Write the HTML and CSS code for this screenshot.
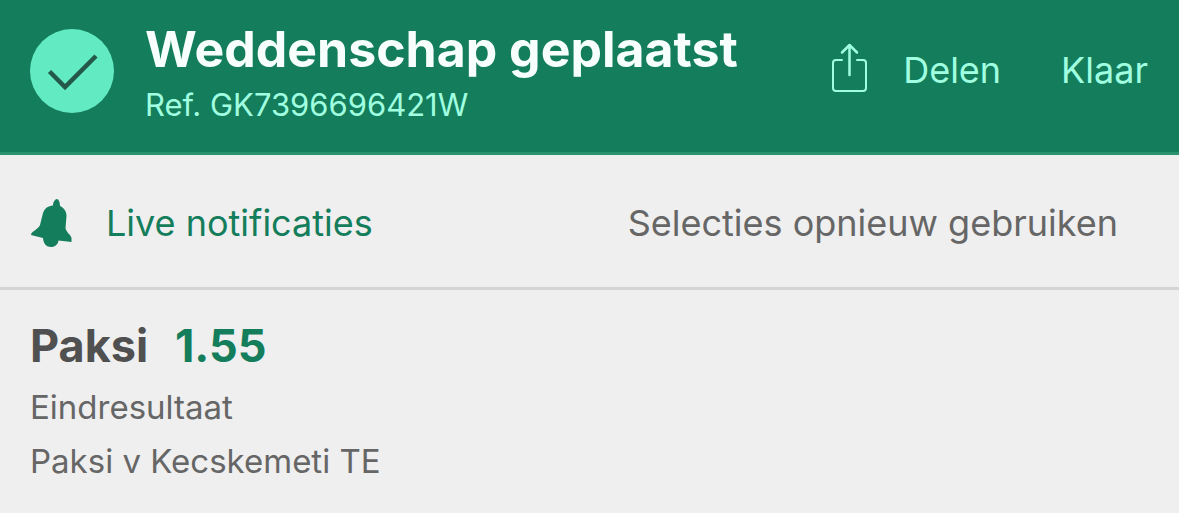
FILE: index.html
```html
<!DOCTYPE html>
<html lang="nl">
<head>
  <meta charset="utf-8">
  <meta name="viewport" content="width=device-width, initial-scale=1">
  <title>Weddenschap geplaatst</title>
  <link rel="stylesheet" href="styles.css">
</head>
<body>
  <header class="receipt-header">
    <svg class="check-icon" viewBox="0 0 84 84" aria-hidden="true">
      <circle cx="42" cy="42" r="42" fill="#62ebc3"/>
      <path d="M19.500 42.500 L35 58 L66 27" fill="none" stroke="#24594a" stroke-width="4.500"/>
    </svg>
    <div class="receipt-title">
      <h1>Weddenschap geplaatst</h1>
      <p>Ref. GK7396696421W</p>
    </div>
    <div class="receipt-actions">
      <button type="button" class="header-button">
        <svg class="share-icon" viewBox="0 0 36 50" aria-hidden="true">
          <path stroke-width="2" d="M11 17 H5 Q2 17 2 20 V45 Q2 48 5 48 H32 Q35 48 35 45 V20 Q35 17 32 17 H26"/>
          <path stroke-width="2.500" d="M18.500 32 V2 M11 9.500 L18.500 2 L26 9.500"/>
        </svg>
        Delen
      </button>
      <button type="button" class="header-button">Klaar</button>
    </div>
  </header>

  <div class="toolbar">
    <button type="button" class="toolbar-button live">
      <svg class="bell-icon" viewBox="0 0 42 48" aria-hidden="true">
        <path d="M27 0 C28.500 0 30 3 30 7 C34 9 36.500 12 36.500 17 L35.500 29 C36 33 41 36 41.500 39 L41.500 43 L28.500 41.500 C28 45.500 25 48 21 48 C16.500 48 13.500 45 13 39 L1 36 C1 32 8 31 10 26 L13 14 C15 9 18 7 23 6.500 C23 3 25 0 27 0 Z"/>
      </svg>
      Live notificaties
    </button>
    <button type="button" class="toolbar-button">Selecties opnieuw gebruiken</button>
  </div>

  <main class="selection">
    <h2>Paksi <span class="odds">1.55</span></h2>
    <p>Eindresultaat</p>
    <p>Paksi v Kecskemeti TE</p>
  </main>
</body>
</html>
```

FILE: styles.css
```css
* {
  box-sizing: border-box;
}

body {
  margin: 0;
  background-color: #efefef;
  color: #666;
  font-family: Inter, "Liberation Sans", sans-serif;
}

h1, h2, p {
  margin: 0;
}

button {
  padding: 0;
  border: none;
  background: none;
  color: inherit;
  font-family: inherit;
  font-size: 36px;
  cursor: pointer;
}

.receipt-header {
  display: flex;
  align-items: flex-start;
  padding: 18px 31px 22px 30px;
  background-color: #147d5b;
  border-bottom: 3px solid #2b9270;
  color: #a0ffe0;
}

.check-icon {
  flex: none;
  width: 84px;
  height: 84px;
  margin-top: 11px;
}

.receipt-title {
  margin-left: 31px;
}

.receipt-title h1 {
  color: #f6fffc;
  font-size: 50px;
  font-weight: 700;
  line-height: 62px;
}

.receipt-title p {
  font-size: 31px;
  line-height: 50px;
}

.receipt-actions {
  display: flex;
  gap: 60px;
  margin-left: auto;
  padding-top: 24px;
}

.header-button {
  display: flex;
  align-items: center;
  gap: 36px;
  height: 56px;
}

.share-icon {
  width: 36px;
  height: 50px;
  margin-bottom: 4px;
  fill: none;
  stroke: currentColor;
  stroke-linecap: round;
  stroke-linejoin: round;
}

.toolbar {
  display: flex;
  align-items: center;
  justify-content: space-between;
  height: 135px;
  padding: 4px 61px 0 30px;
  border-bottom: 3px solid #d4d4d4;
}

.toolbar-button {
  display: flex;
  align-items: center;
  gap: 34px;
}

.live {
  color: #147d5b;
}

.bell-icon {
  width: 42px;
  height: 48px;
  fill: currentColor;
}

.selection {
  padding: 22px 30px;
}

.selection h2 {
  color: #505050;
  font-size: 45px;
  font-weight: 700;
  line-height: 68px;
}

.odds {
  margin-left: 16px;
  color: #147d5b;
}

.selection p {
  font-size: 33px;
  line-height: 54px;
}
```
